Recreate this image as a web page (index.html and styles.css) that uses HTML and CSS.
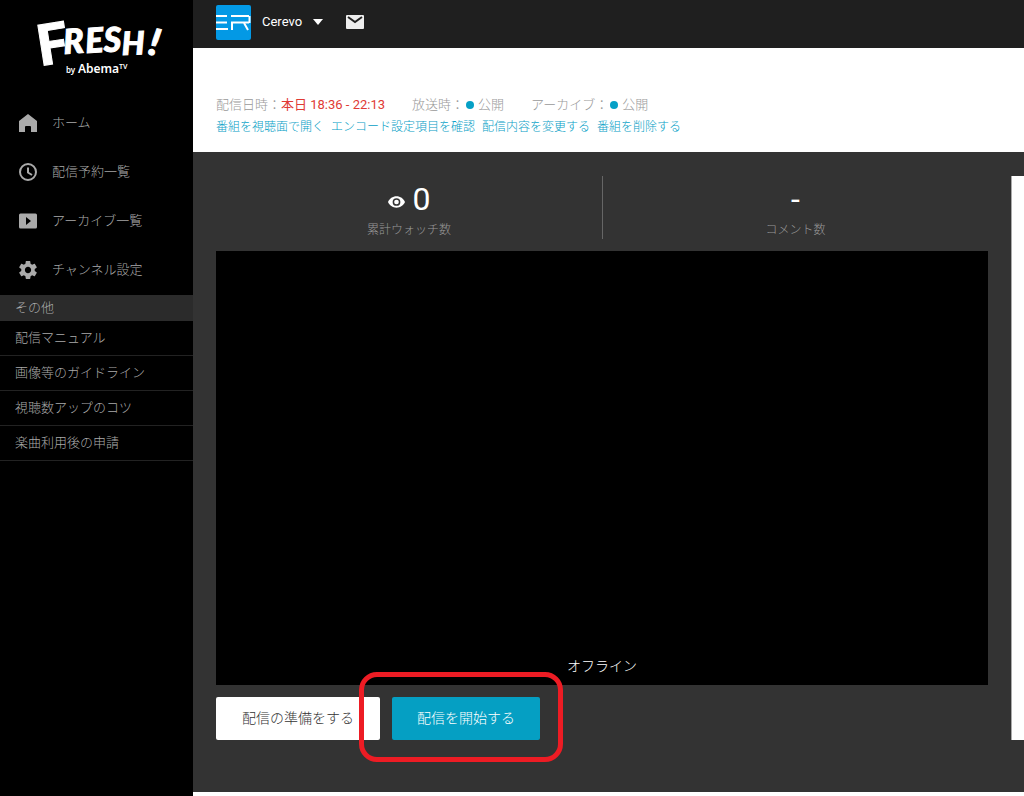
FILE: index.html
```html
<!DOCTYPE html>
<html lang="ja">
<head>
<meta charset="utf-8">
<meta name="viewport" content="width=device-width, initial-scale=1">
<title>FRESH! by AbemaTV</title>
<link rel="stylesheet" href="styles.css">
</head>
<body>
<div class="app">
  <aside class="sidebar">
    <a class="brand" href="#" aria-label="FRESH! by AbemaTV">
      <svg class="brand-logo" viewBox="-20 -16 160 80" aria-hidden="true">
        <g class="brand-name">
          <text class="upright" transform="translate(4 50) rotate(-9)" font-size="56">F</text>
          <text transform="translate(28 38) rotate(-4)" font-size="34">R</text>
          <text transform="translate(50 37) rotate(-4)" font-size="34">E</text>
          <text transform="translate(68 36) rotate(-2)" font-size="34">S</text>
          <text transform="translate(86 39) rotate(-2)" font-size="32">H</text>
          <text transform="translate(111 38) rotate(12)" font-size="37">!</text>
        </g>
        <g class="brand-sub">
          <text x="30" y="57" font-size="8">by</text>
          <text x="42" y="57" font-size="12">Abema</text>
          <text x="83" y="53" font-size="7">TV</text>
        </g>
      </svg>
    </a>
    <nav class="menu">
      <a class="menu-item" href="#">
        <svg class="icon" viewBox="0 0 18 18"><path d="M9 0 0 7v11h6v-5a1 1 0 0 1 1-1h4a1 1 0 0 1 1 1v5h6V7z"/></svg>
        <span>ホーム</span>
      </a>
      <a class="menu-item" href="#">
        <svg class="icon icon-line" viewBox="0 0 18 18"><circle cx="9" cy="9" r="8"/><path d="M9 4.500v5l4 2.500"/></svg>
        <span>配信予約一覧</span>
      </a>
      <a class="menu-item" href="#">
        <svg class="icon" viewBox="0 0 18 18"><path fill-rule="evenodd" d="M1.500 1.500h15A1.500 1.500 0 0 1 18 3v12a1.500 1.500 0 0 1-1.500 1.500h-15A1.500 1.500 0 0 1 0 15V3a1.500 1.500 0 0 1 1.500-1.500zM7 5v8l5-4z"/></svg>
        <span>アーカイブ一覧</span>
      </a>
      <a class="menu-item" href="#">
        <svg class="icon" viewBox="2 2 20 20"><path d="M19.430 12.980c.04-.32.07-.64.07-.98s-.03-.66-.07-.98l2.110-1.650c.19-.15.24-.42.12-.64l-2-3.460c-.12-.22-.39-.3-.61-.22l-2.490 1c-.52-.4-1.080-.73-1.690-.98l-.38-2.650C14.460 2.180 14.250 2 14 2h-4c-.25 0-.46.18-.49.42l-.38 2.650c-.61.25-1.170.59-1.690.98l-2.490-1c-.23-.09-.49 0-.61.22l-2 3.460c-.13.22-.07.49.12.64l2.110 1.650c-.04.32-.07.65-.07.98s.03.66.07.98l-2.110 1.650c-.19.15-.24.42-.12.64l2 3.460c.12.22.39.3.61.22l2.490-1c.52.4 1.080.73 1.690.98l.38 2.650c.03.24.24.42.49.42h4c.25 0 .46-.18.49-.42l.38-2.650c.61-.25 1.170-.59 1.690-.98l2.490 1c.23.09.49 0 .61-.22l2-3.460c.12-.22.07-.49-.12-.64l-2.110-1.650zM12 15.500c-1.930 0-3.500-1.570-3.500-3.500s1.570-3.500 3.500-3.500 3.500 1.570 3.500 3.500-1.570 3.500-3.500 3.500z"/></svg>
        <span>チャンネル設定</span>
      </a>
    </nav>
    <h2 class="sub-title">その他</h2>
    <nav class="sub-menu">
      <a href="#">配信マニュアル</a>
      <a href="#">画像等のガイドライン</a>
      <a href="#">視聴数アップのコツ</a>
      <a href="#">楽曲利用後の申請</a>
    </nav>
  </aside>

  <div class="page">
    <header class="topbar">
      <button class="account" type="button">
        <svg class="avatar" viewBox="0 0 35 35" aria-hidden="true">
          <rect class="avatar-bg" width="35" height="35" rx="2"/>
          <g class="avatar-mark">
            <line x1="0" y1="11" x2="11" y2="11"/><line x1="0" y1="17.500" x2="11" y2="17.500"/><line x1="0" y1="24" x2="12" y2="24"/>
            <line x1="15" y1="11" x2="33" y2="11"/><line x1="33.500" y1="11" x2="33.500" y2="18"/><line x1="15" y1="17.500" x2="33" y2="17.500"/><line x1="16" y1="17.500" x2="16" y2="25"/><line x1="28" y1="18" x2="32" y2="25"/>
          </g>
        </svg>
        <span>Cerevo</span>
        <svg class="caret" viewBox="0 0 10 6" aria-hidden="true"><path d="M0 0h10L5 6z"/></svg>
      </button>
      <button class="mail" type="button" aria-label="メッセージ">
        <svg viewBox="0 0 18 14" aria-hidden="true"><rect width="18" height="14" rx="1"/><path d="m2 2 7 5 7-5"/></svg>
      </button>
    </header>

    <section class="program">
      <div class="program-info">
        <span class="status">配信日時：<strong>本日 18:36 - 22:13</strong></span>
        <span class="status">放送時：<i class="dot"></i>公開</span>
        <span class="status">アーカイブ：<i class="dot"></i>公開</span>
      </div>
      <div class="program-links">
        <a href="#">番組を視聴面で開く</a>
        <a href="#">エンコード設定項目を確認</a>
        <a href="#">配信内容を変更する</a>
        <a href="#">番組を削除する</a>
      </div>
    </section>

    <main class="studio">
      <div class="live">
        <div class="stats">
          <div class="stat">
            <div class="stat-value">
              <svg class="eye" viewBox="0 0 18 12" aria-hidden="true"><path fill-rule="evenodd" d="M9 0c4 0 7.500 2.500 9 6-1.500 3.500-5 6-9 6S1.500 9.500 0 6c1.500-3.500 5-6 9-6zm0 1.900a4.100 4.100 0 1 0 0 8.200 4.100 4.100 0 0 0 0-8.200zm0 1.600a2.500 2.500 0 1 1 0 5 2.500 2.500 0 0 1 0-5z"/></svg>
              <span>0</span>
            </div>
            <div class="stat-label">累計ウォッチ数</div>
          </div>
          <div class="stat">
            <div class="stat-value"><span>-</span></div>
            <div class="stat-label">コメント数</div>
          </div>
        </div>
        <div class="player">オフライン</div>
        <div class="actions">
          <button class="btn btn-prepare" type="button">配信の準備をする</button>
          <div class="start">
            <button class="btn btn-start" type="button">配信を開始する</button>
            <span class="highlight"></span>
          </div>
        </div>
      </div>
      <aside class="comments" aria-label="コメント"></aside>
    </main>
  </div>
</div>
</body>
</html>
```
FILE: styles.css
```css
* {
  box-sizing: border-box;
}

body {
  margin: 0;
  background: #fff;
  color: #999;
  font: 300 13px/20px Roboto, "Noto Sans CJK JP", sans-serif;
}

a {
  color: inherit;
  text-decoration: none;
}

button {
  border: 0;
  padding: 0;
  background: none;
  font: inherit;
  cursor: pointer;
}

.app {
  display: flex;
  min-height: 100vh;
}

/* Sidebar */
.sidebar {
  flex: 0 0 193px;
  background: #000;
  color: #aaa;
}

.brand {
  display: block;
  padding-left: 16px;
}

.brand-logo {
  display: block;
  width: 160px;
  height: 80px;
  overflow: visible;
  fill: #fff;
}

.brand-name {
  stroke: #fff;
  stroke-width: 1;
  font-family: Lato, sans-serif;
  font-weight: 900;
  font-style: italic;
}

.upright {
  font-style: normal;
}

.brand-sub {
  font-family: "Noto Sans", sans-serif;
  font-weight: 600;
}

.menu {
  padding-top: 18px;
}

.menu-item {
  display: flex;
  align-items: center;
  gap: 15px;
  height: 49px;
  padding-left: 19px;
}

.icon {
  width: 18px;
  height: 18px;
  fill: #aaa;
}

.icon-line {
  fill: none;
  stroke: #aaa;
  stroke-width: 2;
}

.sub-title {
  margin: 1px 0 0;
  padding: 3px 15px;
  background: #2b2b2b;
  font: inherit;
}

.sub-menu a {
  display: block;
  padding: 7px 15px;
  border-bottom: 1px solid #222;
}

/* Header */
.page {
  flex: 1;
  min-width: 0;
  display: flex;
  flex-direction: column;
  padding-bottom: 4px;
}

.topbar {
  display: flex;
  align-items: center;
  gap: 23px;
  height: 48px;
  padding: 0 23px 4px;
  background: #1f1f1f;
}

.account {
  display: flex;
  align-items: center;
  gap: 11px;
  color: #fff;
  font-weight: 400;
}

.avatar {
  width: 35px;
  height: 35px;
}

.avatar-bg {
  fill: #0399e5;
}

.avatar-mark {
  stroke: #fff;
  stroke-width: 2;
}

.caret {
  width: 10px;
  height: 6px;
  fill: #fff;
}

.mail svg {
  display: block;
  width: 18px;
  height: 14px;
  fill: #eee;
  stroke: none;
}

.mail path {
  fill: none;
  stroke: #222;
  stroke-width: 2;
}

/* Program summary */
.program {
  padding: 45px 23px 15px;
}

.program-info {
  display: flex;
  gap: 27px;
  height: 24px;
  padding-bottom: 1px;
}

.program-info strong {
  color: #e03a34;
  font-weight: 400;
}

.status {
  display: flex;
  align-items: center;
}

.dot {
  width: 8px;
  height: 8px;
  margin: 0 4px 0 2px;
  border-radius: 50%;
  background: #06a0c6;
}

.program-links {
  display: flex;
  gap: 7px;
  color: #06a0c6;
  font-size: 12px;
}

/* Studio */
.studio {
  flex: 1;
  display: flex;
  align-items: flex-start;
  gap: 23px;
  padding: 24px 0 52px 23px;
  background: #333;
}

.live {
  flex: 1;
}

.stats {
  display: grid;
  grid-template-columns: 1fr 1fr;
  margin-bottom: 12px;
}

.stat {
  text-align: center;
}

.stat + .stat {
  border-left: 1px solid #666;
}

.stat-value {
  display: flex;
  align-items: center;
  justify-content: center;
  gap: 8px;
  height: 46px;
  color: #fff;
  font-size: 32px;
  font-weight: 400;
}

.eye {
  width: 17px;
  height: 12px;
  margin-top: 6px;
  fill: #fff;
}

.stat-label {
  color: #999;
  font-size: 12px;
  line-height: 17px;
}

.player {
  display: flex;
  align-items: flex-end;
  justify-content: center;
  aspect-ratio: 16 / 9;
  padding-bottom: 9px;
  background: #000;
  color: #fff;
  font-size: 14px;
}

.actions {
  display: flex;
  gap: 12px;
  padding-top: 12px;
}

.start {
  position: relative;
}

.btn {
  padding: 11px 25px 12px;
  border-radius: 2px;
  font-size: 14px;
}

.btn-prepare {
  padding-right: 26px;
  padding-left: 26px;
  background: #fff;
  color: #333;
}

.btn-start {
  background: #059fc3;
  color: #fff;
}

.highlight {
  position: absolute;
  inset: -25px -23px -22px -33px;
  border: 5px solid #ed1c24;
  border-radius: 18px;
  pointer-events: none;
}

.comments {
  flex: 0 0 13px;
  align-self: stretch;
  border-left: 1px solid #aaa;
  background: #fff;
}
```
